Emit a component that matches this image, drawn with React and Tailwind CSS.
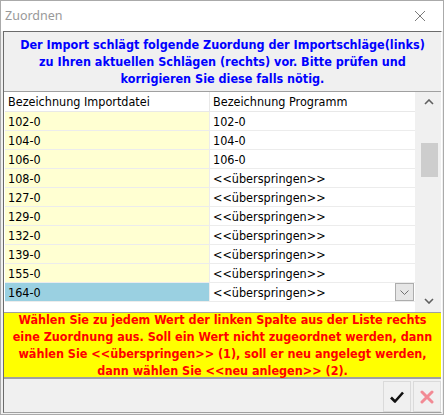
import React from "react";

const rows = [
  ["102-0", "102-0"],
  ["104-0", "104-0"],
  ["106-0", "106-0"],
  ["108-0", "<<überspringen>>"],
  ["127-0", "<<überspringen>>"],
  ["129-0", "<<überspringen>>"],
  ["132-0", "<<überspringen>>"],
  ["139-0", "<<überspringen>>"],
  ["155-0", "<<überspringen>>"],
  ["164-0", "<<überspringen>>"],
];

const tahomaLike = {
  fontFamily: '"DejaVu Sans Condensed", "DejaVu Sans", sans-serif',
  fontStretch: "condensed",
};

function Chevron({ up, className }) {
  return (
    <svg width="10" height="6" viewBox="0 0 10 6" className={className}>
      <path
        d={up ? "M1 5 L5 1 L9 5" : "M1 1 L5 5 L9 1"}
        fill="none"
        stroke="#606060"
        strokeWidth="1.6"
      />
    </svg>
  );
}

export default function App() {
  return (
    <div
      className="w-[444px] h-[415px] bg-white border border-[#aaaaaa] flex flex-col overflow-hidden"
      style={tahomaLike}
    >
      {/* title bar */}
      <div className="h-[30px] flex items-center justify-between bg-white shrink-0">
        <span
          className="pl-[4px] text-[12.5px] text-[#999999]"
          style={{ fontFamily: '"Noto Sans", "Open Sans", sans-serif', fontStretch: "normal" }}
        >
          Zuordnen
        </span>
        <svg width="12" height="12" viewBox="0 0 12 12" className="mr-[17px]">
          <path d="M1 1 L11 11 M11 1 L1 11" stroke="#7a7a7a" strokeWidth="1" />
        </svg>
      </div>

      {/* client area */}
      <div className="flex-1 flex flex-col bg-[#f0f0f0] pl-[2px] pr-[1px] pb-[1px]">
        <div className="flex-1 flex flex-col border-l border-t border-[#6b6b6b] border-r border-r-[#ffffff] border-b border-b-[#a0a0a0]">
          {/* hint */}
          <div className="h-[60px] flex items-center justify-center bg-[#f0f0f0] border-b border-[#a0a0a0]">
            <p className="text-center text-[12.5px] leading-[17px] font-bold text-[#0000ff]">
              Der Import schlägt folgende Zuordung der Importschläge(links)
              <br />
              zu Ihren aktuellen Schlägen (rechts) vor. Bitte prüfen und
              <br />
              korrigieren Sie diese falls nötig.
            </p>
          </div>

          {/* grid */}
          <div className="h-[221px] flex bg-white border-b border-[#a0a0a0]">
            <div className="flex-1 flex flex-col pl-[1px] text-[12.5px] text-black">
              <div className="h-[20px] flex border-b border-[#e8e8e8]">
                <div className="w-[205px] pl-[3px] pt-[1px] flex items-center border-r border-[#e8e8e8]">
                  Bezeichnung Importdatei
                </div>
                <div className="flex-1 pl-[3px] pt-[1px] flex items-center">
                  Bezeichnung Programm
                </div>
              </div>
              {rows.map(([a, b], i) => {
                const last = i === rows.length - 1;
                return (
                  <div key={a} className="h-[19px] flex border-b border-[#ececec]">
                    <div
                      className={
                        last
                          ? "w-[205px] pl-[3px] pt-[2px] flex items-center bg-[#9ad0e1] border-r border-[#ececec]"
                          : "w-[205px] pl-[3px] pt-[2px] flex items-center bg-[#ffffd2] border-r border-[#ececec]"
                      }
                    >
                      {a}
                    </div>
                    <div className="flex-1 flex items-center justify-between pl-[3px]">
                      <span className="pt-[2px]">{b}</span>
                      {last && (
                        <span className="w-[19px] h-[18px] flex items-center justify-center bg-[#e6e6e6] border border-[#adadad] mr-[1px]">
                          <svg width="9" height="5" viewBox="0 0 9 5">
                            <path d="M0.5 0.5 L4.5 4.5 L8.5 0.5" fill="none" stroke="#707070" strokeWidth="1" />
                          </svg>
                        </span>
                      )}
                    </div>
                  </div>
                );
              })}
            </div>

            {/* scrollbar */}
            <div className="w-[26px] flex flex-col items-center bg-[#f0f0f0] pt-[7px] pb-[8px] pl-[2px]">
              <Chevron up />
              <div className="mt-[38px] w-[17px] h-[34px] bg-[#cdcdcd]" />
              <div className="flex-1" />
              <Chevron />
            </div>
          </div>

          {/* instructions */}
          <div className="h-[66px] flex items-center justify-center bg-[#ffff00] border-b-2 border-[#a0a0a0]">
            <p className="text-center text-[12.5px] leading-[17px] font-bold text-[#ff0000]">
              Wählen Sie zu jedem Wert der linken Spalte aus der Liste rechts
              <br />
              eine Zuordnung aus. Soll ein Wert nicht zugeordnet werden, dann
              <br />
              wählen Sie &lt;&lt;überspringen&gt;&gt; (1), soll er neu angelegt werden,
              <br />
              dann wählen Sie &lt;&lt;neu anlegen&gt;&gt; (2).
            </p>
          </div>

          {/* buttons */}
          <div className="flex-1 flex justify-end items-stretch gap-[2px] pt-[2px]">
            <button className="w-[28px] flex items-center justify-center bg-[#f0f0f0] border border-[#dadada]">
              <svg width="16" height="14" viewBox="0 0 16 14">
                <path d="M2 7.5 L6 11.5 L14 2.5" fill="none" stroke="#111111" strokeWidth="2.6" strokeLinejoin="round" />
              </svg>
            </button>
            <button className="w-[28px] flex items-center justify-center bg-[#f0f0f0] border border-[#dadada]">
              <svg width="14" height="14" viewBox="0 0 14 14">
                <path d="M2 2 L12 12 M12 2 L2 12" stroke="#f28a94" strokeWidth="3" strokeLinecap="round" />
              </svg>
            </button>
          </div>
        </div>
      </div>
    </div>
  );
}
